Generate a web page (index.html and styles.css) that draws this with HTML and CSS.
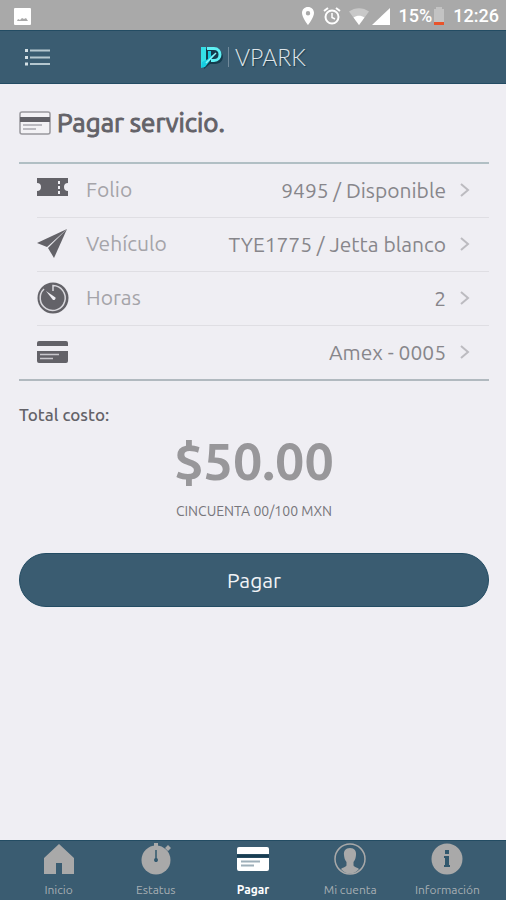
FILE: index.html
```html
<!DOCTYPE html>
<html lang="es">
<head>
<meta charset="utf-8">
<meta name="viewport" content="width=device-width, initial-scale=1">
<title>VPARK - Pagar servicio</title>
<link rel="stylesheet" href="styles.css">
</head>
<body>
<div class="status">
  <svg class="status-photo" width="17" height="17" viewBox="0 0 17 17" aria-hidden="true"><rect width="17" height="17" rx="1" fill="#fff"/><path d="M3 13l1-2 2 1 2-2 2 1 2-1 2 3z" fill="#a9a9a9"/></svg>
  <div class="status-icons">
    <svg width="14" height="18" viewBox="0 0 14 18" aria-hidden="true"><path fill="#fff" fill-rule="evenodd" d="M7 0C3.500 0 1 2.600 1 6c0 4.500 6 12 6 12s6-7.500 6-12c0-3.400-2.500-6-6-6zm0 4a2.200 2.200 0 1 1 0 4.400A2.200 2.200 0 0 1 7 4z"/></svg>
    <svg class="alarm" width="18" height="18" viewBox="0 0 18 18" fill="none" stroke="#fff" stroke-width="2" aria-hidden="true"><circle cx="9" cy="10" r="6.500"/><path d="M1 4l4-3M17 4l-4-3"/><path d="M9 6v4.500l3 1.500" stroke-width="1.500"/></svg>
    <svg width="20" height="17" viewBox="0 0 20 17" aria-hidden="true"><path d="M0 3.500C6-1 14-1 20 3.500L10 17z" fill="#c8c8c8"/><path d="M4.500 9.500C8 7 12 7 15.500 9.500L10 17z" fill="#fff"/></svg>
    <svg width="18" height="17" viewBox="0 0 18 17" aria-hidden="true"><path d="M18 0v17H0z" fill="#fff"/></svg>
  </div>
  <span class="battery-text">15%</span>
  <svg width="12" height="18" viewBox="0 0 12 18" aria-hidden="true"><path d="M3 0h6v2h2v13H1V2h2z" fill="#c3c3c3"/><path d="M1 15h10v3H1z" fill="#e9532a"/></svg>
  <time class="clock">12:26</time>
</div>

<header class="topbar">
  <button class="menu" type="button" aria-label="Menú">
    <svg width="26" height="18" viewBox="0 0 26 18" aria-hidden="true"><path d="M6 2.500h20M6 9.500h20M6 16h20" stroke="#b5c7cf" stroke-width="2"/><path d="M1 2.500h3M1 9.500h3M1 16h3" stroke="#d4e0e5" stroke-width="3"/></svg>
  </button>
  <div class="brand">
    <svg width="24" height="23" viewBox="0 0 24 23" aria-hidden="true"><path d="M3 3h12c10 0 11 15 0 15h-5l-6 5z" fill="#153b4d"/><path d="M1 1h5v14l-5 7z" fill="#35dfe6"/><path d="M7 2.500h7c8 0 8 12 0 12h-3" fill="none" stroke="#5ff0f4" stroke-width="3"/><path d="M1 22l1-6 6-3V5h3v5l5-3-7 9-4 5z" fill="#16cde0"/><path d="M6 17l10-10" stroke="#8af5f7" stroke-width="1.500"/></svg>
    <span class="brand-line"></span>
    <span class="brand-name">VPARK</span>
  </div>
</header>

<main class="content">
  <h1 class="title">
    <svg width="32" height="24" viewBox="0 0 32 24" aria-hidden="true"><rect x="1" y="1" width="30" height="22" rx="2" fill="#f3f2f5" stroke="#99989d" stroke-width="1.500"/><path d="M1 6h30v5H1z" fill="#636268"/><path d="M4 14h19M4 18h13" stroke="#bbbac0" stroke-width="2"/></svg>
    <span>Pagar servicio.</span>
  </h1>

  <ul class="list">
    <li><a class="row" href="#folio">
      <svg class="row-icon" width="32" height="32" viewBox="0 0 32 32" aria-hidden="true"><path d="M0 4h31v5a4 4 0 0 0 0 8v5H0v-5a4 4 0 0 0 0-8z" fill="#636268"/><path d="M22 7v13" stroke="#efeef3" stroke-width="2" stroke-dasharray="3 2"/></svg>
      <span class="label">Folio</span><span class="value">9495 / Disponible</span>
      <svg class="chevron" width="12" height="16" viewBox="0 0 12 16" aria-hidden="true"><path d="M2 2l7 6-7 6"/></svg>
    </a></li>
    <li><a class="row" href="#vehiculo">
      <svg class="row-icon" width="32" height="32" viewBox="0 0 32 32" aria-hidden="true"><path d="M0 15L30 1 10 19z" fill="#636268"/><path d="M30 1L17 30l-6-10z" fill="#636268"/></svg>
      <span class="label">Vehículo</span><span class="value">TYE1775 / Jetta blanco</span>
      <svg class="chevron" width="12" height="16" viewBox="0 0 12 16" aria-hidden="true"><path d="M2 2l7 6-7 6"/></svg>
    </a></li>
    <li><a class="row" href="#horas">
      <svg class="row-icon" width="32" height="32" viewBox="0 0 32 32" aria-hidden="true"><circle cx="16" cy="16" r="15.500" fill="#636268"/><path d="M7 7a12.500 12.500 0 1 0 9-3.500V9" fill="none" stroke="#d9d8dd" stroke-width="1.500"/><path d="M9 9l9.500 6.500a2 2 0 0 1-2.500 2.500z" fill="#efeef3"/></svg>
      <span class="label">Horas</span><span class="value">2</span>
      <svg class="chevron" width="12" height="16" viewBox="0 0 12 16" aria-hidden="true"><path d="M2 2l7 6-7 6"/></svg>
    </a></li>
    <li><a class="row" href="#tarjeta">
      <svg class="row-icon" width="32" height="32" viewBox="0 0 32 32" aria-hidden="true"><path d="M0 10V7q0-2 2-2h27q2 0 2 2v3zM0 15h31v10q0 2-2 2H2q-2 0-2-2z" fill="#636268"/><path d="M3 18.500h19M3 22.500h13" stroke="#c9c8cd" stroke-width="1.500"/></svg>
      <span class="label"></span><span class="value">Amex - 0005</span>
      <svg class="chevron" width="12" height="16" viewBox="0 0 12 16" aria-hidden="true"><path d="M2 2l7 6-7 6"/></svg>
    </a></li>
  </ul>

  <section class="total">
    <h2 class="total-label">Total costo:</h2>
    <p class="amount">$50.00</p>
    <p class="words">CINCUENTA 00/100 MXN</p>
  </section>
  <button class="pay" type="button">Pagar</button>
</main>

<nav class="tabs">
  <a class="tab" href="#inicio">
    <svg width="32" height="32" viewBox="0 0 32 32" aria-hidden="true"><path d="M16 1l15 14v16H19V20h-6v11H1V15z" fill="#a9a9a9"/></svg>
    <span>Inicio</span></a>
  <a class="tab" href="#estatus">
    <svg width="32" height="32" viewBox="0 0 32 32" aria-hidden="true"><circle cx="16" cy="17" r="14.500" fill="#a9a9a9"/><path d="M14 0h4v4h-4zM25 5l3-3 3 3-3 3z" fill="#a9a9a9"/><path d="M16 7v12" stroke="#31586d" stroke-width="1.500"/><circle cx="16" cy="17" r="2" fill="#31586d"/></svg>
    <span>Estatus</span></a>
  <a class="tab active" href="#pagar" aria-current="page">
    <svg width="32" height="32" viewBox="0 0 32 32" aria-hidden="true"><path d="M0 11V6q0-2 2-2h28q2 0 2 2v5zM0 15h32v11q0 2-2 2H2q-2 0-2-2z" fill="#fff"/><path d="M0 13h32" stroke="#173d52" stroke-width="3"/><path d="M4 18.500h19M4 22.500h13" stroke="#9eafb9" stroke-width="2"/></svg>
    <span>Pagar</span></a>
  <a class="tab" href="#cuenta">
    <svg width="32" height="32" viewBox="0 0 32 32" aria-hidden="true"><circle cx="16" cy="16" r="15" fill="none" stroke="#a9a9a9" stroke-width="1.500"/><path d="M16 5c4.500 0 6.500 3 6 7-.2 3-1 5-2.500 7v3c0 2 3 2 5.500 4-5 6-13 6-18 0 2.500-2 5.500-2 5.500-4v-3c-1.500-2-2.300-4-2.500-7-.5-4 1.500-7 6-7z" fill="#a9a9a9"/></svg>
    <span>Mi cuenta</span></a>
  <a class="tab" href="#informacion">
    <svg width="32" height="32" viewBox="0 0 32 32" aria-hidden="true"><circle cx="16" cy="16" r="15.500" fill="#a9a9a9"/><path d="M14 7h4v4h-4zM13 13h5v9h1v2h-6v-2h1v-7h-1z" fill="#31586d"/></svg>
    <span>Información</span></a>
</nav>
</body>
</html>
```
FILE: styles.css
```css
* {
  box-sizing: border-box;
}

body {
  margin: 0;
  min-height: 100vh;
  display: flex;
  flex-direction: column;
  background: #efeef3;
  color: #636268;
  font-family: Ubuntu, "Noto Sans", sans-serif;
}

a {
  color: inherit;
  text-decoration: none;
}

svg {
  display: block;
  flex: none;
}

.status {
  display: flex;
  align-items: center;
  height: 30px;
  padding: 2px 7px 0 14px;
  background: #a9a9a9;
  color: #fff;
  font: 500 18px/28px Roboto, sans-serif;
}

.status-icons {
  display: flex;
  align-items: center;
  gap: 8px;
  margin-left: auto;
}

.status-icons svg:last-child {
  margin-left: -5px;
}

.battery-text {
  margin: 0 1px 0 9px;
}

.clock {
  margin-left: 8px;
}

.topbar {
  display: grid;
  grid-template-columns: 1fr auto 1fr;
  align-items: center;
  height: 54px;
  padding: 0 24px;
  background: #3a5c71;
  border-top: 1px solid #234c63;
  border-bottom: 1px solid #234c63;
}

.menu {
  justify-self: start;
  padding: 0;
  border: 0;
  background: none;
}

.brand {
  display: flex;
  align-items: center;
  gap: 4px;
}

.brand-line {
  width: 1px;
  height: 20px;
  background: #71899a;
}

.brand-name {
  margin-left: 2px;
  color: #dfe5e9;
  font: 300 23px/28px Lato, sans-serif;
  text-shadow: 1px 1px 1px #203f50;
}

.content {
  flex: 1;
  padding: 24px 17px 24px 19px;
}

.title {
  display: flex;
  align-items: center;
  gap: 6px;
  margin: 0 0 24px;
  font-size: 26px;
  line-height: 30px;
  font-weight: 400;
  -webkit-text-stroke: 1px currentColor;
}

.list {
  margin: 0;
  padding: 0 0 0 18px;
  list-style: none;
  border-top: 2px solid #b1bfc4;
  border-bottom: 2px solid #b1b9bf;
}

.list li + li {
  border-top: 1px solid #dfdee3;
}

.row {
  display: flex;
  align-items: center;
  height: 53px;
  padding: 0 18px 2px 0;
  font-size: 21px;
  line-height: 28px;
}

.label {
  margin-left: 17px;
  padding-bottom: 2px;
  color: #a5a4a9;
}

.value {
  margin: 0 13px 0 auto;
  color: #87868b;
}

.chevron {
  fill: none;
  stroke: #bcbbc0;
  stroke-width: 2;
}

.total {
  text-align: center;
}

.total-label {
  margin: 23px 0 0;
  font-size: 17px;
  line-height: 22px;
  font-weight: 500;
  text-align: left;
}

.amount {
  margin: 6px 0 12px;
  color: #98979a;
  font-size: 52px;
  line-height: 58px;
  font-weight: 700;
}

.words {
  margin: 0;
  color: #77767b;
  font-size: 14px;
  line-height: 18px;
}

.pay {
  display: block;
  width: 100%;
  height: 54px;
  margin-top: 33px;
  border: 1px solid #234c63;
  border-radius: 27px;
  background: #3a5c71;
  color: #f1f3f6;
  font: 400 21px/28px Ubuntu, "Noto Sans", sans-serif;
}

.tabs {
  display: grid;
  grid-template-columns: repeat(5, 1fr);
  height: 60px;
  padding: 2px 10px 0;
  background: #3a5c71;
  border-top: 1px solid #234c63;
}

.tab {
  display: flex;
  flex-direction: column;
  align-items: center;
  gap: 7px;
  color: #a6aeb3;
  font-size: 12px;
  line-height: 16px;
}

.active {
  color: #fff;
  font-weight: 700;
}
```
